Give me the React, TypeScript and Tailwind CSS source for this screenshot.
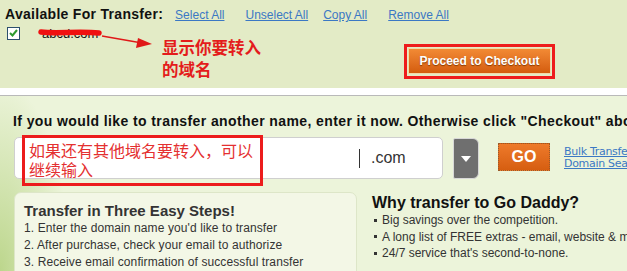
import React from "react";

const sans = "font-['Liberation_Sans',Arial,sans-serif]";
const cjk = "font-['Noto_Sans_CJK_SC','Liberation_Sans',sans-serif]";

function TopLinks() {
  const links = [
    { name: "Select All", ml: "ml-[12px]" },
    { name: "Unselect All", ml: "ml-[21px]" },
    { name: "Copy All", ml: "ml-[15px]" },
    { name: "Remove All", ml: "ml-[21px]" },
  ];
  return (
    <>
      {links.map((l) => (
        <a key={l.name} href="#" className={`${l.ml} shrink-0 text-[12px] text-[#3b78c4] underline`}>
          {l.name}
        </a>
      ))}
    </>
  );
}

export default function App() {
  return (
    <div className={`${sans} w-[627px] h-[271px] overflow-hidden flex flex-col whitespace-nowrap`}>
      {/* Available for transfer */}
      <div className="relative h-[88px] shrink-0 bg-[#e3ebc6] flex flex-col">
        <div className="flex items-baseline pl-[5px] pt-[4px]">
          <span className="shrink-0 text-[14px] font-bold tracking-[0.3px] text-[#111]">Available For Transfer:</span>
          <TopLinks />
        </div>
        <div className="flex items-center pl-[7px] mt-px h-[14px]">
          <div className="shrink-0 w-[13px] h-[13px] border border-[#2d4f6e] bg-white flex items-center justify-center">
            <svg width="9" height="8" viewBox="0 0 9 8">
              <path d="M1 4 L3.5 6.5 L8 1" stroke="#2e9a2e" strokeWidth="2" fill="none" />
            </svg>
          </div>
          <div className="relative ml-[22px]">
            <span className="text-[13px] text-[#111]">abcd.com</span>
            <svg className="absolute left-[-4px] top-[7px]" width="64" height="10" viewBox="0 0 64 10">
              <path d="M3 4 C 18 6, 40 3, 61 5" stroke="#f01010" strokeWidth="5.5" strokeLinecap="round" fill="none" />
            </svg>
          </div>
        </div>
        <div className="pl-[408px] mt-[8px]">
          <div className="relative w-[143px]">
            <button className="w-[143px] h-[26px] border border-[#f3d9a8] bg-gradient-to-b from-[#f28a34] to-[#d45c0c] text-white text-[12px] font-bold [text-shadow:0_1px_1px_#8a3a00]">
              Proceed to Checkout
            </button>
            <div className="absolute -left-[4px] -top-[4px] -right-[4px] -bottom-[5px] border-[3px] border-[#ee1c1c]" />
          </div>
        </div>
        {/* annotation */}
        <svg className="absolute left-[100px] top-[33px]" width="56" height="16" viewBox="0 0 56 16">
          <path d="M2 3 L42 10" stroke="#e01818" strokeWidth="1.3" fill="none" />
          <path d="M38 5 L52 11 L36 15 Z" fill="#e01818" />
        </svg>
        <div className={`${cjk} absolute left-[162px] top-[36px] text-[16.5px] leading-[22px] font-bold text-[#e41c1c]`}>
          显示你要转入
          <br />
          的域名
        </div>
      </div>

      <div className="h-[7px] shrink-0 bg-white" />
      <div className="h-px shrink-0 bg-[#b9b9b9]" />

      {/* Transfer another */}
      <div className="flex-1 overflow-hidden bg-[#ecf4da] bg-[radial-gradient(70px_190px_at_0_100%,#bcd68c,#ecf4da)]">
        <div className="pl-[13px] pt-[17px] text-[14px] leading-[17px] font-bold tracking-[0.4px] text-[#111]">
          If you would like to transfer another name, enter it now. Otherwise click "Checkout" above.
        </div>

        <div className="flex items-start pl-[14px] mt-[7px]">
          <div className="relative shrink-0 w-[429px] h-[42px] bg-white border border-[#cfcfcf] rounded-[5px] flex items-center">
            <div className="ml-[344px] w-px h-[19px] bg-[#333]" />
            <span className="ml-[11px] text-[16px] text-[#333]">.com</span>
            <div className="absolute left-[7px] -top-[3px] w-[241px] h-[51px] border-[3px] border-[#ec1c1c] pl-[4px] pt-[3px]">
              <div className={`${cjk} text-[16px] leading-[19px] text-[#e43030]`}>
                如果还有其他域名要转入，可以
                <br />
                继续输入
              </div>
            </div>
          </div>
          <div className="shrink-0 ml-[10px] mt-px w-[26px] h-[41px] bg-[#6f6f6f] rounded-r-[6px] rounded-l-[2px] border border-[#d8d8d8] flex items-center justify-center">
            <svg width="10" height="6" viewBox="0 0 10 6">
              <path d="M0 0 L10 0 L5 6 Z" fill="#fff" />
            </svg>
          </div>
          <button className="shrink-0 ml-[19px] mt-[6px] w-[52px] h-[28px] bg-gradient-to-b from-[#ee7a2a] to-[#d65e10] border border-dotted border-[#9a5a2a] text-white text-[16px] font-bold">
            GO
          </button>
          <div className="shrink-0 ml-[14px] mt-[9px] flex flex-col text-[11px] leading-[12px] font-['DejaVu_Sans',Verdana,sans-serif] text-[#3b78c4] tracking-[-0.3px]">
            <a href="#" className="underline">Bulk Transfer</a>
            <a href="#" className="underline">Domain Search</a>
          </div>
        </div>

        <div className="flex items-start pl-[14px] mt-[13px]">
          <div className="shrink-0 w-[343px] h-[120px] bg-[#f3f7e6] border border-[#dde6c8] rounded-[7px] pl-[9px] pt-[9px] text-[#333]">
            <div className="text-[15px] leading-[18px] font-bold">Transfer in Three Easy Steps!</div>
            <div className="text-[12px] leading-[17px] tracking-[0.1px]">
              <div>1. Enter the domain name you'd like to transfer</div>
              <div>2. After purchase, check your email to authorize</div>
              <div>3. Receive email confirmation of successful transfer</div>
            </div>
          </div>
          <div className="shrink-0 ml-[15px] pt-[1px]">
            <div className="text-[16px] leading-[19px] font-bold text-[#111]">Why transfer to Go Daddy?</div>
            <div className="text-[12px] leading-[16.5px] text-[#333]">
              {[
                "Big savings over the competition.",
                "A long list of FREE extras - email, website & more.",
                "24/7 service that's second-to-none.",
              ].map((t) => (
                <div key={t} className="flex items-center">
                  <span className="w-[3px] h-[3px] bg-[#333] ml-[2px] mr-[5px]" />
                  {t}
                </div>
              ))}
            </div>
            <div className="mt-[5px] text-[12px] font-bold text-[#d0101a]">
              Call Transfer Services Specialists at 1-480-505-8866
            </div>
          </div>
        </div>
      </div>
    </div>
  );
}
